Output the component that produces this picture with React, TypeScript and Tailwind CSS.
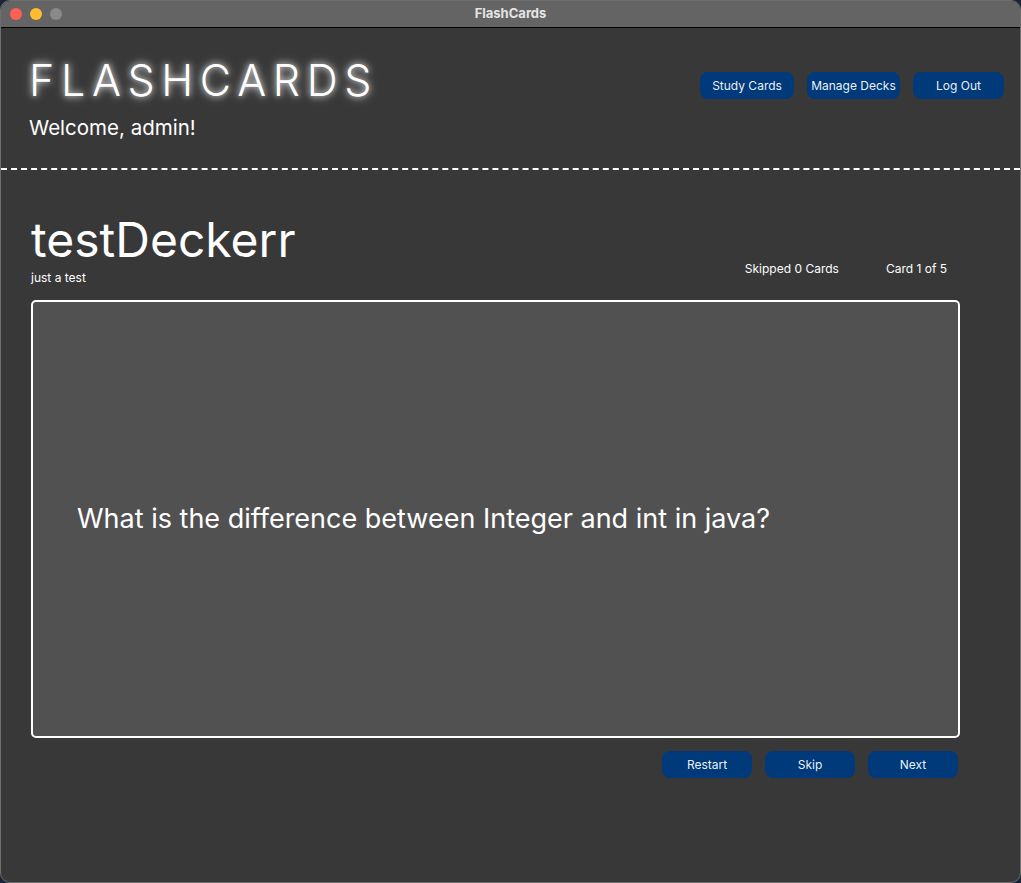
import React from 'react';

const font = { fontFamily: 'Inter, "Noto Sans", sans-serif' };

function NavButton({ label, className = '' }: { label: string; className?: string }) {
  return (
    <button
      className={`h-[27px] rounded-[8px] bg-[#003a7a] text-[12px] text-white/95 leading-none ${className}`}
    >
      {label}
    </button>
  );
}

export default function App() {
  return (
    <div className="h-[883px] w-[1021px] bg-[#1b2436] overflow-hidden" style={font}>
      <div className="flex h-full flex-col overflow-hidden rounded-[10px] border border-[#6e6e6e] bg-[#383838]">
        {/* title bar */}
        <div className="relative flex h-[27px] shrink-0 items-center justify-center border-b border-black bg-[#646464]">
          <div className="absolute left-[9px] top-[7px] flex gap-[8px]">
            <span className="h-[12px] w-[12px] rounded-full bg-[#fe5f57]" />
            <span className="h-[12px] w-[12px] rounded-full bg-[#febc2e]" />
            <span className="h-[12px] w-[12px] rounded-full bg-[#8a8a8a]" />
          </div>
          <span className="text-[13px] font-bold text-[#e4e4e4]">FlashCards</span>
        </div>

        {/* header */}
        <div className="flex shrink-0 items-start justify-between pl-[28px] pr-[16px] pt-[26px]">
          <div>
            <h1
              className="text-[43px] font-light leading-[52px] tracking-[0.155em] text-white"
              style={{ textShadow: '0 0 6px rgba(255,255,255,0.85), 0 0 12px rgba(255,255,255,0.45)' }}
            >
              FLASHCARDS
            </h1>
            <p className="mt-[9px] text-[20.5px] leading-[26px] text-white">Welcome, admin!</p>
          </div>
          <div className="mt-[18px] flex gap-[13px]">
            <NavButton label="Study Cards" className="w-[94px]" />
            <NavButton label="Manage Decks" className="w-[93px]" />
            <NavButton label="Log Out" className="w-[91px]" />
          </div>
        </div>

        <div className="mt-[27px] shrink-0 border-t-2 border-dashed border-white" />

        {/* study area */}
        <div className="flex flex-col pl-[30px] pr-[60px] pt-[42px]">
          <div className="flex items-end justify-between">
            <div>
              <h2 className="text-[48px] leading-[56px] text-white">testDeckerr</h2>
              <p className="mt-[2px] text-[12px] leading-[15px] text-white">just a test</p>
            </div>
            <div className="mb-[7px] flex gap-[47px] pr-[13px] text-[12px] text-white">
              <span>Skipped 0 Cards</span>
              <span>Card 1 of 5</span>
            </div>
          </div>

          <div className="mt-[15px] flex h-[438px] w-[929px] items-center rounded-[5px] border-2 border-white bg-[#515151] px-[44px]">
            <p className="text-[27px] text-white">What is the difference between Integer and int in java?</p>
          </div>

          <div className="mt-[13px] flex w-[929px] justify-end gap-[13px] pr-[2px]">
            <NavButton label="Restart" className="w-[90px]" />
            <NavButton label="Skip" className="w-[90px]" />
            <NavButton label="Next" className="w-[90px]" />
          </div>
        </div>
      </div>
    </div>
  );
}
